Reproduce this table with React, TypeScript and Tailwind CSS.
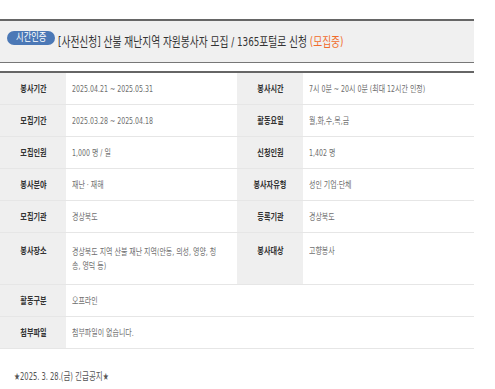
import React from 'react'

const FONT = "font-['DejaVu_Sans_Condensed','Noto_Sans_CJK_KR',sans-serif]"

function T({ children, className = '' }: { children: React.ReactNode; className?: string }) {
  return <span className={`inline-block whitespace-nowrap scale-x-75 ${className}`}>{children}</span>
}

function Label({ children, top }: { children: React.ReactNode; top?: boolean }) {
  return (
    <div
      className={`w-[66px] shrink-0 bg-[#efefef] flex justify-center ${top ? 'items-start pt-[11px]' : 'items-center'}`}
    >
      <T className="origin-center text-[9.5px] leading-[14px] font-bold text-[#333]">{children}</T>
    </div>
  )
}

function Value({ children, wide }: { children: React.ReactNode; wide?: boolean }) {
  return (
    <div className={`${wide ? 'flex-1' : 'w-[171px]'} flex flex-col justify-center px-[6px]`}>
      {children}
    </div>
  )
}

function V({ children }: { children: React.ReactNode }) {
  return <T className="origin-left text-[9.3px] leading-[14px] text-[#6f6f6f]">{children}</T>
}

const ROWS: [string, string, string, string][] = [
  ['봉사기간', '2025.04.21 ~ 2025.05.31', '봉사시간', '7시 0분 ~ 20시 0분 (최대 12시간 인정)'],
  ['모집기간', '2025.03.28 ~ 2025.04.18', '활동요일', '월,화,수,목,금'],
  ['모집인원', '1,000 명 / 일', '신청인원', '1,402 명'],
  ['봉사분야', '재난 · 재해', '봉사자유형', '성인 기업·단체'],
  ['모집기관', '경상북도', '등록기관', '경상북도'],
]

export default function App() {
  return (
    <div className={`w-[495px] h-[389px] bg-white pt-[19px] ${FONT}`}>
      <div className="w-[474px]">
        {/* Title */}
        <div className="h-[44px] bg-[#f0f0f0] border-t-2 border-b border-t-[#666] border-b-[#777] flex items-center pl-[7px]">
          <div className="w-[48px] h-[14px] mb-2 rounded-full bg-[#4b78b6] flex items-center justify-center">
            <T className="origin-center text-[11px] leading-[14px] text-white">시간인증</T>
          </div>
          <T className="origin-left ml-[3px] text-[13px] leading-[16px] text-[#333]">
            [사전신청] 산불 재난지역 자원봉사자 모집 / 1365포털로 신청 <span className="text-[#f06c2c]">(모집중)</span>
          </T>
        </div>

        {/* Detail table */}
        <div className="mt-[8px] border-t-2 border-[#666]">
          {ROWS.map(([l1, v1, l2, v2]) => (
            <div key={l1} className="flex h-[32px] border-b border-[#e6e6e6]">
              <Label>{l1}</Label>
              <Value>
                <V>{v1}</V>
              </Value>
              <Label>{l2}</Label>
              <Value wide>
                <V>{v2}</V>
              </Value>
            </div>
          ))}

          <div className="flex h-[52px] border-b border-[#e6e6e6]">
            <Label top>봉사장소</Label>
            <Value>
              <V>경상북도 지역 산불 재난 지역(안동, 의성, 영양, 청</V>
              <V>송, 영덕 등)</V>
            </Value>
            <Label top>봉사대상</Label>
            <div className="flex-1 flex items-start pt-[11px] px-[6px]">
              <V>고향봉사</V>
            </div>
          </div>

          <div className="flex h-[32px] border-b border-[#e6e6e6]">
            <Label>활동구분</Label>
            <Value wide>
              <V>오프라인</V>
            </Value>
          </div>
          <div className="flex h-[32px] border-b border-[#e6e6e6]">
            <Label>첨부파일</Label>
            <Value wide>
              <V>첨부파일이 없습니다.</V>
            </Value>
          </div>
        </div>

        {/* Notice */}
        <div className="mt-[14px] pl-[14px]">
          <T className="origin-left text-[10px] leading-[14px] text-[#555]">★2025. 3. 28.(금) 긴급공지★</T>
        </div>
      </div>
    </div>
  )
}
